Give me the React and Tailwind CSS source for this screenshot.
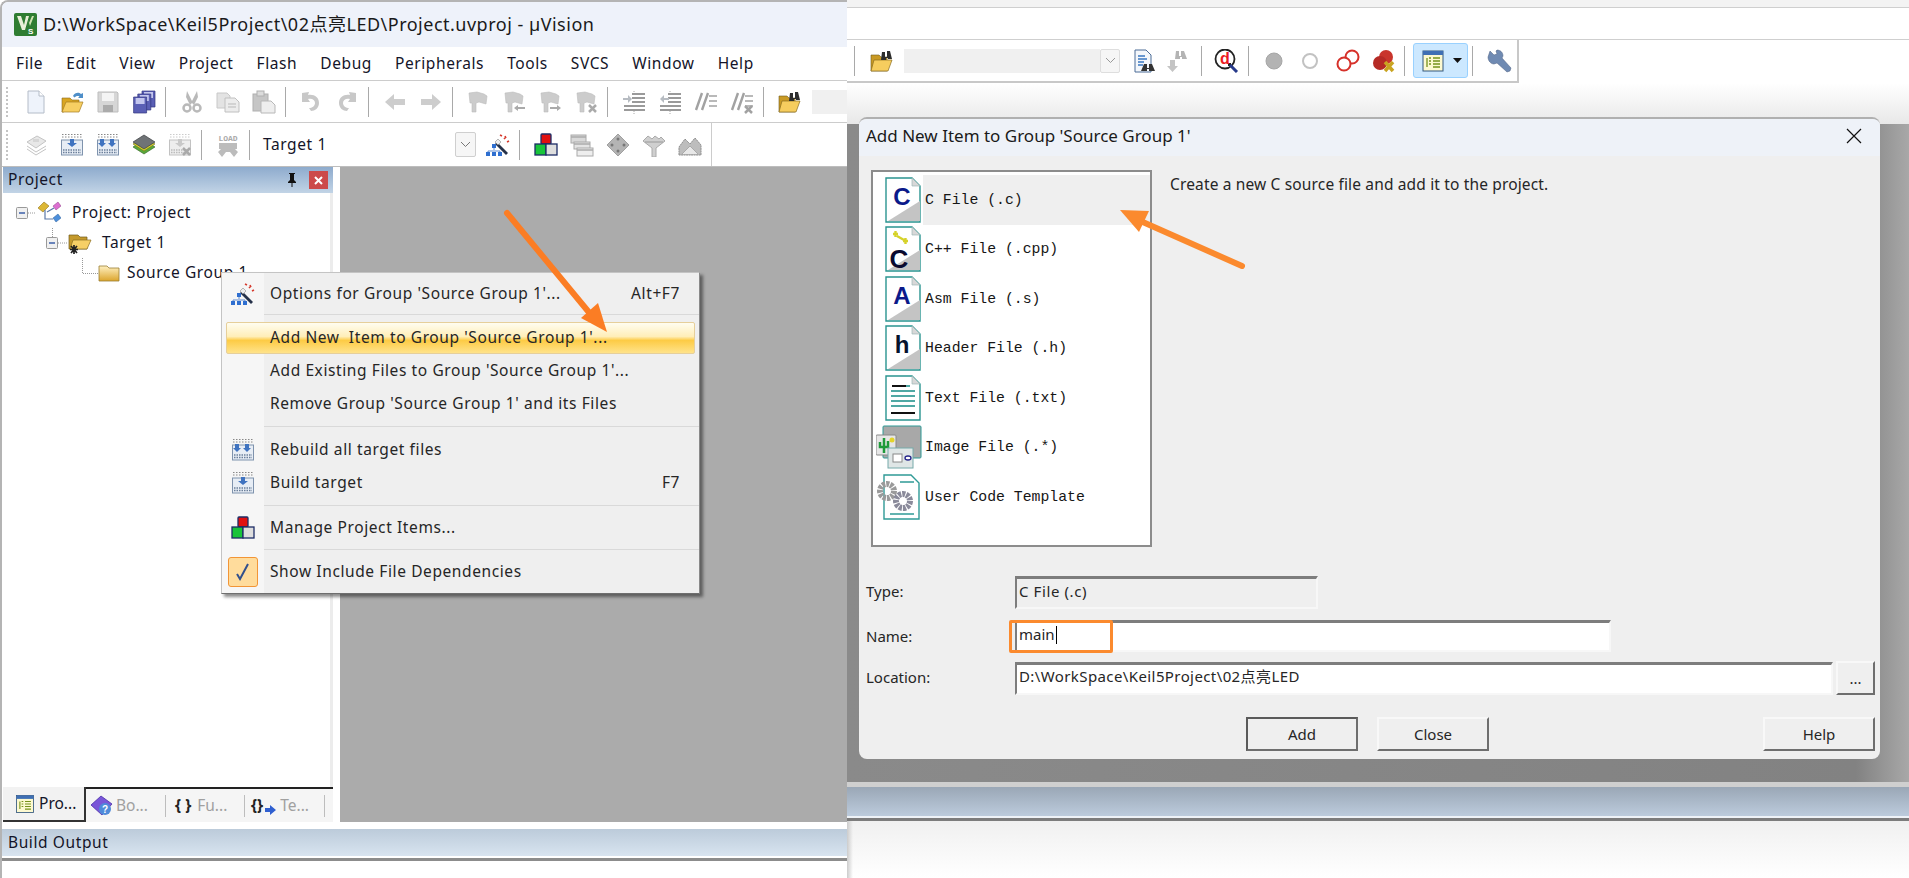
// --- toolbar / menu icons, drawn by hand on a 24 box ---
function Ico({ children, w = 24, h = 24, vb = '0 0 24 24' }) {
  return <svg width={w} height={h} viewBox={vb} className="shrink-0">{children}</svg>
}
const G = '#b9b9b9'
const NewDoc = () => <Ico><path d="M4 1h11l5 5v17H4z" fill="#eef3fb" stroke="#b4bcc8" /><path d="M15 1v5h5" fill="#fff" stroke="#b4bcc8" /></Ico>
const OpenFolder = () => <Ico w={26}><path d="M2 8h8l2 2h7v3H7l-3 9H2z" fill="#d9a520" stroke="#8a6a20" strokeWidth=".6" /><path d="M6 12h17l-4 10H2z" fill="#f7cf62" stroke="#a57d22" strokeWidth=".7" /><path d="M13 6c2-4 6-4 8-2l2-1v5h-5l1.500-1.500c-2-1-4 0-5 1z" fill="#4f8fc9" /></Ico>
const Save = () => <Ico><path d="M2 2h19l1 1v19H2z" fill="#d6d6d6" stroke="#bdbdbd" /><rect x="6" y="3" width="12" height="8" fill="#f4f4f4" /><rect x="7" y="15" width="10" height="7" fill="#ababab" /></Ico>
const SaveAll = () => <Ico>{[0, 3, 6].map(o => <g key={o} transform={`translate(${9 - o * 1.4} ${o})`}><path d="M1 1h13v16H1z" fill="#5a5fb5" stroke="#34387f" strokeWidth=".7" /><rect x="3" y="2" width="9" height="6" fill="#c3c6ee" /></g>)}</Ico>
const Cut = () => <Ico><path d="M7 1l5 10 5-10 1 6-4 8-2-2-2 2-4-8z" fill={G} /><circle cx="7" cy="18" r="3.500" fill="none" stroke={G} strokeWidth="2.500" /><circle cx="17" cy="18" r="3.500" fill="none" stroke={G} strokeWidth="2.500" /></Ico>
const Copy = () => <Ico><path d="M1 3h10l3 3v12H1z" fill="#e3e3e3" stroke="#c8c8c8" /><path d="M9 8h10l4 4v10H9z" fill="#ececec" stroke="#c0c0c0" /><path d="M12 14h8M12 17h8" stroke={G} /></Ico>
const Paste = () => <Ico><rect x="1" y="4" width="15" height="17" fill="#c6c6c6" stroke="#b0b0b0" /><rect x="5" y="1" width="7" height="5" fill="#dcdcdc" stroke="#b0b0b0" /><path d="M9 11h10l4 4v8H9z" fill="#eee" stroke="#b8b8b8" /></Ico>
const Undo = ({ flip }) => <Ico><g transform={flip ? 'matrix(-1 0 0 1 24 0)' : undefined}><path d="M3 3l7-1-1 3c6-1 11 2 11 8 0 5-4 8-8 8l-2-3c3 0 6-2 6-5s-3-5-7-4l2 3-8 0z" fill="#c8c8c8" /></g></Ico>
const Arrow = ({ flip }) => <Ico><g transform={flip ? 'matrix(-1 0 0 1 24 0)' : undefined}><path d="M2 12l9-8v5h11v6H11v5z" fill="#cdcdcd" /></g></Ico>
const Flag = ({ mark }) => (
  <Ico>
    <path d="M3 3l8-1 7 2 3 2-1 8-7-2-3 1v9H6v-9l-2 0z" fill="#cccccc" stroke="#bcbcbc" strokeWidth=".6" />
    {mark === 'l' && <path d="M12 18l4-3v2h7v2h-7v2z" fill="#aaa" />}
    {mark === 'r' && <path d="M23 18l-4-3v2h-7v2h7v2z" fill="#aaa" />}
    {mark === 'x' && <path d="M15 15l7 7m0-7l-7 7" stroke="#aaa" strokeWidth="2.500" />}
  </Ico>
)
const Indent = ({ flip }) => (
  <Ico>
    <path d="M10 4h13M10 8h13M10 12h13M2 16h21M2 20h21" stroke="#9a9a9a" strokeWidth="1.800" />
    <path d="M12 1v2M12 21v3" stroke="#aaa" strokeDasharray="1 1" />
    <g transform={flip ? 'matrix(-1 0 0 1 12 0)' : undefined}><path d="M1 8h5V5l4 4-4 4v-3H1z" fill="#b7bcc2" /></g>
  </Ico>
)
const Comment = ({ x }) => (
  <Ico>
    <path d="M2 20L8 3M8 20L14 3" stroke="#a2a2a2" strokeWidth="2.400" />
    <path d="M15 6h8M15 11h8M15 16h8" stroke="#a2a2a2" strokeWidth="1.500" />
    {x && <path d="M15 16l7 7m0-7l-7 7" stroke="#a2a2a2" strokeWidth="2.500" />}
  </Ico>
)
const FindFolder = () => <Ico w={26}><path d="M2 6h8l2 2h6v14H2z" fill="#c99a24" stroke="#6e5a20" strokeWidth=".6" /><path d="M5 11h18l-4 11H2z" fill="#f6cd5e" stroke="#8a6d20" strokeWidth=".7" /><path d="M13 3h3v5h2V2h3l2 8h-4v-1h-2v2h-5z" fill="#2d2d2d" /></Ico>
const Translate = () => <Ico><path d="M3 9l10-6 9 5-10 7z" fill="#e8e8e8" stroke="#c4c4c4" /><path d="M3 13l9 6 10-6M3 16l9 6 10-6" fill="none" stroke="#c4c4c4" /><path d="M9 6h6v3H9z" fill="#d6d6d6" /></Ico>
const Build = ({ two, off }) => {
  const c = off ? '#c9c9c9' : '#3f73c0'
  const frame = off ? '#c2c2c2' : '#7f93ad'
  return (
    <Ico>
      <path d="M2 4h20M2 1.500h20" stroke={off ? '#ccc' : '#888'} strokeDasharray="1.500 1.500" />
      <rect x="1.500" y="7" width="21" height="15" fill={off ? '#eee' : '#e7edf5'} stroke={frame} />
      <path d="M3 17h18M3 19.500h18" stroke={off ? '#bbb' : '#6b7f9a'} strokeDasharray="1.500 1" strokeWidth="1.400" />
      {two ? <path d="M4 6h4v4h2l-4 4-4-4h2zM14 6h4v4h2l-4 4-4-4h2z" fill={c} /> : <path d="M10 6h4v4h3l-5 4-5-4h3z" fill={c} />}
      {off && <path d="M15 15l7 7m0-7l-7 7" stroke="#aaa" strokeWidth="2.500" />}
    </Ico>
  )
}
const BatchBuild = () => <Ico><path d="M1 14l11 7 11-7-3-2H4z" fill="#5aa83a" stroke="#2f5f22" strokeWidth=".6" /><path d="M1 11l11 7 11-7-3-2H4z" fill="#dbd62a" stroke="#6f6d1a" strokeWidth=".6" /><path d="M1 9l11-7 11 7-11 7z" fill="#6f7376" stroke="#3b3d40" strokeWidth=".7" /></Ico>
const Load = () => <Ico><text x="12" y="8" textAnchor="middle" fontSize="8" fontFamily='"Liberation Mono",monospace' fill="#aaa" fontWeight="700">LOAD</text><path d="M3 10h18v6h-2l3 3-4 5-4-5-2 0-2 0-4 5-4-5 3-3H3z" fill="#bcbcbc" /></Ico>
const Wand = () => <Ico><path d="M11 9l11 11-2 2L9 11z" fill="#26324a" /><path d="M9 9l3-3 3 3-3 3z" fill="#eee" stroke="#777" strokeWidth=".5" /><path d="M14 2l2 1M19 3l1 2M21 9l2-1M18 6l2-2" stroke="#d63a2e" strokeWidth="1.600" /><path d="M8 13v4M2 21v-3h12v3" fill="none" stroke="#5f8bd0" /><rect x="6" y="11" width="4" height="4" fill="#2f6fd0" /><rect x="0" y="19" width="4" height="4" fill="#2f6fd0" /><rect x="6" y="19" width="4" height="4" fill="#2f6fd0" /><rect x="12" y="19" width="4" height="4" fill="#2f6fd0" /></Ico>
const Manage = () => <Ico><rect x="7" y="1" width="10" height="10" rx="1" fill="#e01010" stroke="#1c2c66" strokeWidth="1.300" /><rect x="1" y="11" width="11" height="11" fill="#18c43a" stroke="#1c2c66" strokeWidth="1.300" /><rect x="12" y="11" width="11" height="11" fill="#dedede" stroke="#1c2c66" strokeWidth="1.300" /></Ico>
const Windows = () => <Ico><rect x="1" y="2" width="15" height="8" fill="#d9d9d9" stroke="#aaa" /><rect x="4" y="9" width="16" height="7" fill="#e4e4e4" stroke="#aaa" /><rect x="7" y="15" width="16" height="8" fill="#eee" stroke="#aaa" /><path d="M1 4h15M4 11h16M7 17h16" stroke="#aaa" strokeWidth="1.500" /></Ico>
const Diamond = () => <Ico><path d="M12 1l11 11-11 11L1 12z" fill="#b4b4b4" stroke="#a0a0a0" /><circle cx="12" cy="6" r="1.500" fill="#777" /><circle cx="6" cy="12" r="1.500" fill="#777" /><circle cx="18" cy="12" r="1.500" fill="#777" /><circle cx="12" cy="18" r="1.500" fill="#777" /></Ico>
const Funnel = () => <Ico><path d="M1 8l5-5 4 3 3-3 4 3 2-2 4 4-9 7v9h-4v-9z" fill="#cfcfcf" stroke="#aaa" /><path d="M3 9h18" stroke="#999" /></Ico>
const Stack = () => <Ico><path d="M1 22v-8l6-8 5 5 5-6 6 7v10z" fill="#bdbdbd" stroke="#8f8f8f" strokeDasharray="2 .5" /><path d="M4 21l8-8 8 8" fill="#e8e8e8" stroke="#aaa" /></Ico>
const DocFind = () => <Ico><path d="M3 1h11l5 5v17H3z" fill="#f4f7fb" stroke="#4d6c97" /><path d="M6 7h7M6 10h9M6 13h6M6 16h5" stroke="#3a78c2" strokeWidth="1.300" /><path d="M12 15h3v4h2v-4h3l3 7h-6v-2h-2v2h-6z" fill="#333" /></Ico>
const FindDown = () => <Ico><path d="M10 2h3v5h2V2h3l3 8h-5V8h-2v2H9z" fill="#b4b4b4" /><path d="M4 11h5v6h3l-5.500 6L1 17h3z" fill="#c4c4c4" /></Ico>
const Debug = () => <Ico w={26}><circle cx="11" cy="10" r="9.500" fill="#fff" stroke="#222" strokeWidth="1.800" /><rect x="14" y="14" width="3" height="3" fill="#222" /><path d="M16 16l7 7" stroke="#273a8a" strokeWidth="3" /><text x="11" y="15" textAnchor="middle" fontSize="16" fontWeight="700" fontFamily='"Liberation Sans",sans-serif' fill="#ec1c24">d</text></Ico>
const Dot = ({ hollow }) => <Ico><circle cx="12" cy="12" r={hollow ? 7 : 8} fill={hollow ? '#fff' : '#b3b3b3'} stroke={hollow ? '#c2c2c2' : '#a6a6a6'} strokeWidth={hollow ? 2 : 1} /></Ico>
const Rings = () => <Ico w={26}><circle cx="17" cy="8" r="6.500" fill="#fff" stroke="#d6312a" strokeWidth="2" /><circle cx="9" cy="15" r="6.500" fill="#fff" stroke="#d6312a" strokeWidth="2" /></Ico>
const RingsX = () => <Ico w={26}><circle cx="15" cy="8" r="7" fill="#c9352c" /><circle cx="9" cy="14" r="7" fill="#b52a25" /><path d="M14 13l8 9m0-9l-8 9" stroke="#c9a421" strokeWidth="3.500" /></Ico>
const WinView = () => <Ico><rect x="2" y="2" width="20" height="20" fill="#fdf9d0" stroke="#33577e" /><rect x="2" y="2" width="20" height="4" fill="#3f6fb4" /><path d="M6 9v9M8 9h2M8 12h2M8 15h2M12 9h7M12 12h7M12 15h7M12 18h7" stroke="#76921c" strokeWidth="1.300" /></Ico>
const Wrench = () => <Ico w={26}><path d="M3 2l4 4 3-1-1-3 1-1c3 0 6 2 6 6l-1 2 9 10-1 3-3 1-10-9-3 1C4 15 1 12 1 8z" fill="#6f8ab2" stroke="#4c5f80" strokeWidth=".5" /></Ico>

function Sep() {
  return <div className="flex h-full w-[11.5px] items-center pl-[3px]"><div className="h-[30px] w-px bg-[#a9a9a9]" /></div>
}
function Cell({ children }) {
  return <div className="flex w-[36px] shrink-0 items-center justify-center">{children}</div>
}
function Grip() {
  return <div className="flex w-[16px] shrink-0 justify-center pr-[6px]"><div className="h-[30px] w-[2px] border-l-2 border-dotted border-[#c4c4c4]" /></div>
}

function LeftWindow() {
  const menu = ['File', 'Edit', 'View', 'Project', 'Flash', 'Debug', 'Peripherals', 'Tools', 'SVCS', 'Window', 'Help']
  return (
    <div className="flex h-[878px] w-[847px] shrink-0 flex-col overflow-hidden rounded-tl-lg border-l-2 border-t-2 border-[#b4b4b4]">
      <div className="flex h-[45px] shrink-0 items-center gap-[6px] bg-[#eef2fa] pl-[12px] text-[18px] tracking-[.5px] text-[#1a1a1a]">
        <svg width="23" height="23" viewBox="0 0 23 23"><rect width="23" height="23" rx="2" fill="#2f7d32" /><path d="M3 3h4l3 9 2-9h3l-4 14H8z" fill="#e8f0d8" /><path d="M13 3l2 7 3-7h2l-4 10z" fill="#cfe3b0" /><text x="17" y="21" textAnchor="middle" fontSize="8" fontWeight="700" fill="#fff" fontFamily='"Liberation Sans",sans-serif'>S</text></svg>
        <span>D:\WorkSpace\Keil5Project\02点亮LED\Project.uvproj - µVision</span>
      </div>
      <div className="flex h-[34px] shrink-0 items-center gap-[23px] border-b border-[#cccccc] bg-white pl-[14px] text-[15.500px] tracking-[.6px] text-[#141428]">
        {menu.map(m => <span key={m}>{m}</span>)}
      </div>
      <div className="flex h-[42px] shrink-0 items-center border-b border-[#cccccc] bg-white">
        <Grip />
        <Cell><NewDoc /></Cell><Cell><OpenFolder /></Cell><Cell><Save /></Cell><Cell><SaveAll /></Cell>
        <Sep />
        <Cell><Cut /></Cell><Cell><Copy /></Cell><Cell><Paste /></Cell>
        <Sep />
        <Cell><Undo /></Cell><Cell><Undo flip /></Cell>
        <Sep />
        <Cell><Arrow /></Cell><Cell><Arrow flip /></Cell>
        <Sep />
        <Cell><Flag /></Cell><Cell><Flag mark="l" /></Cell><Cell><Flag mark="r" /></Cell><Cell><Flag mark="x" /></Cell>
        <Sep />
        <Cell><Indent /></Cell><Cell><Indent flip /></Cell><Cell><Comment /></Cell><Cell><Comment x /></Cell>
        <Sep />
        <Cell><FindFolder /></Cell>
        <div className="ml-[5px] h-[24px] flex-1 bg-[#f0f0f0]" />
      </div>
      <div className="flex h-[43px] shrink-0 items-center bg-white">
        <div className="flex h-full w-[710px] shrink-0 items-center border-r border-[#cccccc]">
          <Grip />
          <Cell><Translate /></Cell><Cell><Build /></Cell><Cell><Build two /></Cell><Cell><BatchBuild /></Cell><Cell><Build off /></Cell>
          <Sep />
          <Cell><Load /></Cell>
          <Sep />
          <span className="w-[198px] pl-[6px] text-[15.500px] tracking-[.6px] text-[#141428]">Target 1</span>
          <div className="flex h-[25px] w-[21px] items-center justify-center rounded-[2px] border border-[#cfcfcf] bg-[#f6f6f6]">
            <svg width="11" height="7" viewBox="0 0 11 7"><path d="M1 1l4.500 4.500L10 1" fill="none" stroke="#777" /></svg>
          </div>
          <div className="w-[4px]" />
          <Cell><Wand /></Cell>
          <Sep />
          <Cell><Manage /></Cell><Cell><Windows /></Cell><Cell><Diamond /></Cell><Cell><Funnel /></Cell><Cell><Stack /></Cell>
        </div>
      </div>
      <div className="flex flex-1 flex-col">
        <div className="flex h-[656px] shrink-0 border-t border-[#bdbdbd]">
          <ProjectPanel />
          <div className="w-[7px] bg-white" />
          <div className="flex-1 bg-[#ababab]" />
        </div>
        <div className="h-[7px] bg-white" />
        <div className="flex h-[27px] items-center bg-gradient-to-b from-[#bccbda] to-[#d8e4f0] pl-[6px] text-[15.500px] tracking-[.6px] text-[#141428]">Build Output</div>
        <div className="h-[2px] bg-white" />
        <div className="h-[3px] bg-[#8c8c8c]" />
        <div className="flex-1 bg-white" />
      </div>
    </div>
  )
}

function ProjectPanel() {
  return (
    <div className="ml-px flex w-[330px] shrink-0 flex-col bg-white">
      <div className="flex h-[26px] shrink-0 items-center bg-gradient-to-b from-[#8eabcd] to-[#c2d4e6] pl-[5px] pr-[5px] text-[15.500px] tracking-[.6px] text-[#141428]">
        <span className="flex-1">Project</span>
        <svg width="14" height="16" viewBox="0 0 14 16" className="mr-[10px]"><path d="M4 1h6v1H9v6l2 2v1H3v-1l2-2V2H4zM6.500 11h1v4h-1z" fill="#111" /></svg>
        <div className="flex h-[18px] w-[19px] items-center justify-center bg-[#cc4a4a]">
          <svg width="9" height="9" viewBox="0 0 9 9"><path d="M1 1l7 7m0-7l-7 7" stroke="#fff" strokeWidth="2" /></svg>
        </div>
      </div>
      <div className="flex-1 border-r-[3px] border-[#ececec] pt-[5px] text-[15.500px] tracking-[.6px] text-[#141428]">
        <div className="flex h-[30px] items-center">
          <svg width="33" height="30" viewBox="0 0 33 30" className="shrink-0"><rect x="13.500" y="9.500" width="11" height="11" rx="1" fill="#f0f0f0" stroke="#999" /><path d="M16 15h6" stroke="#3d5fa8" strokeWidth="1.500" /><path d="M25 15h8" stroke="#999" strokeDasharray="1 1" /></svg>
          <svg width="25" height="26" viewBox="0 0 25 26" className="shrink-0"><path d="M2 8l6-6 5 4-6 6z" fill="#dcb735" stroke="#94761c" strokeWidth=".6" /><path d="M17 6l5-4 3 4-5 4z" fill="#dc6fd0" stroke="#8d3f86" strokeWidth=".5" /><path d="M17 18l5-4 3 4-5 4z" fill="#4c8fdb" stroke="#2c5f9a" strokeWidth=".5" /><path d="M9 10v9h8M11 12l7-4" fill="none" stroke="#5a78a8" strokeWidth="1.200" /></svg>
          <span className="ml-[11px]">Project: Project</span>
        </div>
        <div className="flex h-[30px] items-center">
          <svg width="64" height="30" viewBox="0 0 64 30" className="shrink-0"><path d="M49.500 0v9" stroke="#999" strokeDasharray="1 1" /><rect x="43.500" y="9.500" width="11" height="11" rx="1" fill="#f0f0f0" stroke="#999" /><path d="M46 15h6" stroke="#3d5fa8" strokeWidth="1.500" /><path d="M55 15h9" stroke="#999" strokeDasharray="1 1" /></svg>
          <svg width="25" height="24" viewBox="0 0 25 24" className="shrink-0"><path d="M2 4h9l2 2h7v12H2z" fill="#c59a2c" stroke="#6f5a1e" strokeWidth=".7" /><path d="M6 9h18l-4 9H3z" fill="#f6cf66" stroke="#8a6d20" strokeWidth=".7" /><path d="M7 14v9M3 18.500h8M4 15l6 7m0-7l-6 7" stroke="#222" strokeWidth="1.700" /></svg>
          <span className="ml-[10px]">Target 1</span>
        </div>
        <div className="flex h-[30px] items-center">
          <svg width="95" height="30" viewBox="0 0 95 30" className="shrink-0"><path d="M79.500 0v15.500H95" fill="none" stroke="#999" strokeDasharray="1 1" /></svg>
          <svg width="22" height="18" viewBox="0 0 22 18" className="shrink-0"><defs><linearGradient id="fo" x1="0" y1="0" x2="0" y2="1"><stop offset="0" stopColor="#fff0c0" /><stop offset="1" stopColor="#dca52c" /></linearGradient></defs><path d="M1 2h8l2 2h10v13H1z" fill="url(#fo)" stroke="#9a7d34" strokeWidth=".8" /></svg>
          <span className="ml-[7px] whitespace-nowrap">Source Group 1</span>
        </div>
      </div>
      <div className="flex h-[35px] shrink-0 items-center bg-[#f5f5f5] text-[15.500px]">
        <div className="flex h-full w-[83px] shrink-0 items-center gap-[5px] border-b-2 border-r-2 border-[#333] bg-[#f2f2f2] pl-[10px] text-[#141428]"><div className="scale-[.85]"><WinView /></div><span className="-ml-[3px]">Pro...</span></div>
        <div className="flex h-full flex-1 items-center border-t-2 border-[#222] text-[#a0a0a0]">
          <div className="flex w-[79px] items-center gap-[2px] pl-[4px]">
            <svg width="24" height="24" viewBox="0 0 24 24"><path d="M1 11L11 2l11 8-10 11z" fill="#7a56d8" stroke="#4a2fa8" strokeWidth=".8" /><circle cx="15" cy="15" r="6" fill="#4f8bda" /><text x="15" y="19" textAnchor="middle" fontSize="10" fontWeight="700" fill="#fff" fontFamily='"Liberation Sans",sans-serif'>?</text></svg>
            <span>Bo...</span>
          </div>
          <div className="h-[22px] w-px bg-[#bdbdbd]" />
          <div className="flex w-[78px] items-center gap-[6px] pl-[9px]"><span className="font-bold text-[#222]">{'{ }'}</span><span>Fu...</span></div>
          <div className="h-[22px] w-px bg-[#bdbdbd]" />
          <div className="flex w-[79px] items-center gap-[2px] pl-[6px]">
            <span className="font-bold text-[#222]">{'{}'}</span>
            <svg width="11" height="10" viewBox="0 0 11 10" className="mt-[8px]"><path d="M0 3h5V0l6 5-6 5V7H0z" fill="#2f5fd0" /></svg>
            <span className="ml-[2px]">Te...</span>
          </div>
          <div className="h-[22px] w-px bg-[#bdbdbd]" />
        </div>
      </div>
    </div>
  )
}

function MenuRow({ icon, label, keys, hot }) {
  return (
    <div className={hot ? 'mx-[4px] flex h-[32px] items-center rounded-[2px] border border-[#e6cf9a] bg-[linear-gradient(180deg,#fffdf0_0%,#ffeeb8_45%,#fdcb45_58%,#ffe38a_100%)] pl-[43px] pr-[15px]' : 'flex h-[33px] items-center pr-[19px]'}>
      {!hot && <div className="flex w-[48px] shrink-0 justify-center pr-[6px]">{icon}</div>}
      <span className="flex-1 whitespace-pre">{label}</span>
      {keys && <span>{keys}</span>}
    </div>
  )
}
const MenuSep = () => <div className="my-[5px] ml-[42px] h-px bg-[#d9d9d9]" />

function ContextMenu() {
  return (
    <div className="absolute left-[221px] top-[272px] flex h-[322px] w-[479px] flex-col border border-[#c4c4c4] border-b-[#6e6e6e] border-r-[#8a8a8a] bg-[linear-gradient(90deg,#f6f6f6_42px,#efefef_42px)] text-[15.500px] tracking-[.6px] text-[#262626] shadow-[3px_3px_3px_rgba(0,0,0,.45)]">
      <div className="flex h-[41px] items-center pr-[19px]">
        <div className="flex w-[48px] shrink-0 justify-center pr-[6px]"><Wand /></div>
        <span className="flex-1">Options for Group 'Source Group 1'...</span>
        <span>Alt+F7</span>
      </div>
      <div className="ml-[42px] h-px bg-[#d9d9d9]" />
      <div className="h-[7px]" />
      <MenuRow hot label="Add New  Item to Group 'Source Group 1'..." />
      <MenuRow label="Add Existing Files to Group 'Source Group 1'..." />
      <MenuRow label="Remove Group 'Source Group 1' and its Files" />
      <div className="my-[6px] ml-[42px] h-px bg-[#d9d9d9]" />
      <MenuRow icon={<Build two />} label="Rebuild all target files" />
      <MenuRow icon={<Build />} label="Build target" keys="F7" />
      <div className="mb-[5px] mt-[6px] ml-[42px] h-px bg-[#d9d9d9]" />
      <MenuRow icon={<Manage />} label="Manage Project Items..." />
      <MenuSep />
      <MenuRow
        icon={
          <div className="flex h-[30px] w-[30px] items-center justify-center rounded-[3px] border border-[#f29536] bg-[#ffdc9c]">
            <svg width="14" height="18" viewBox="0 0 14 18"><path d="M1 11l3 5L12 1" fill="none" stroke="#32508c" strokeWidth="2" /></svg>
          </div>
        }
        label="Show Include File Dependencies"
      />
    </div>
  )
}

// --- file type icons of the dialog list ---
function FileIcon({ children, shaded = true }) {
  return (
    <svg width="36" height="46" viewBox="0 0 36 46" className="shrink-0">
      <path d="M1 1h26l8 8v36H1z" fill="#fff" stroke="#2a9490" strokeWidth="1.400" />
      <path d="M27 1v8h8z" fill="#d8d8d8" stroke="#9fb8b8" strokeWidth=".7" />
      {shaded && <path d="M3 44l32-20v20z" fill="#c4c4c4" />}
      {children}
    </svg>
  )
}
const letter = (t, c) => <text x="17" y="28" textAnchor="middle" fontSize="24" fontWeight="700" fontFamily='"Liberation Sans",sans-serif' fill={c}>{t}</text>
const fileIcons = [
  <FileIcon>{letter('C', '#0b1a8a')}</FileIcon>,
  <FileIcon>
    <path d="M8 8h5M10.500 5v6M18 15h5M20.500 12v6M12 10l7 4" stroke="#d6d22a" strokeWidth="2.400" />
    <text x="14" y="42" textAnchor="middle" fontSize="26" fontWeight="700" fontFamily='"Liberation Sans",sans-serif' fill="#0a0a30">C</text>
  </FileIcon>,
  <FileIcon>{letter('A', '#0b1a8a')}</FileIcon>,
  <FileIcon>{letter('h', '#06122e')}</FileIcon>,
  <FileIcon shaded={false}>
    <path d="M7 11h18M6 16h24M6 21h24M6 26h24M6 31h24" stroke="#4fa8a4" strokeWidth="2" />
    <path d="M7 11h14M6 38h24" stroke="#111" strokeWidth="2" />
  </FileIcon>,
  <svg width="46" height="44" viewBox="0 0 46 44" className="-ml-[9px] shrink-0">
    <rect x="7" y="1" width="38" height="32" rx="1" fill="#a8a8a8" stroke="#2f9a96" />
    <rect x="0" y="10" width="20" height="20" rx="1" fill="#e6e6e6" stroke="#888" />
    <path d="M8 13v15M4 17v5h8v-6" fill="none" stroke="#1f9a3a" strokeWidth="2.500" />
    <circle cx="16" cy="15" r="2.500" fill="#e4d42a" />
    <rect x="12" y="23" width="25" height="20" fill="#dfe6e6" stroke="#7aa" />
    <rect x="17" y="29" width="9" height="8" fill="#fff" stroke="#888" />
    <ellipse cx="32" cy="33" rx="3" ry="2" fill="#fff" stroke="#24248a" strokeWidth="1.300" />
  </svg>,
  <svg width="46" height="46" viewBox="0 0 46 46" className="-ml-[9px] shrink-0">
    <path d="M8 1h27l8 8v36H8z" fill="#fff" stroke="#2f9a96" strokeWidth="1.400" />
    <path d="M14 40h24M24 8h14" stroke="#2f9a96" strokeWidth="1.500" />
    <circle cx="11" cy="17" r="7" fill="none" stroke="#9a9a9a" strokeWidth="6" strokeDasharray="3 1" />
    <circle cx="27" cy="27" r="7" fill="none" stroke="#8a8a9a" strokeWidth="6" strokeDasharray="3 1" />
  </svg>,
]
const files = ['C File (.c)', 'C++ File (.cpp)', 'Asm File (.s)', 'Header File (.h)', 'Text File (.txt)', 'Image File (.*)', 'User Code Template']

function Sunken({ children, className }) {
  return <div className={'flex items-center border-b-2 border-l-2 border-r-2 border-t-[3px] border-b-[#f7f7f7] border-l-[#7d7d7d] border-r-[#f7f7f7] border-t-[#7d7d7d] pb-[4px] pl-[2px] text-[#262626] ' + className}>{children}</div>
}
function Btn({ label, className }) {
  return <button className={'flex h-[34px] items-center justify-center border-2 border-b-[#6e6e6e] border-r-[#6e6e6e] bg-[#efefef] text-[15px] text-[#262626] ' + className}>{label}</button>
}

function Dialog() {
  return (
    <div className="absolute left-[859px] top-[117px] flex h-[642px] w-[1021px] flex-col overflow-hidden rounded-lg border-t-2 border-[#b0b0b0] bg-[#efefef] text-[15px] text-[#262626]">
      <div className="flex h-[37px] shrink-0 items-center justify-between bg-[#eef2f8] pb-[3px] pl-[7px] pr-[18px] text-[17px] text-[#1a1a1a]">
        <span>Add New Item to Group 'Source Group 1'</span>
        <svg width="16" height="16" viewBox="0 0 16 16"><path d="M1 1l14 14m0-14L1 15" stroke="#111" strokeWidth="1.200" /></svg>
      </div>
      <div className="flex pl-[12px] pt-[14px]">
        <div className="h-[377px] w-[281px] shrink-0 border-2 border-[#8c8c8c] bg-white pl-[12px] pt-[3px]">
          {files.map((f, i) => (
            <div key={f} className="flex h-[49.500px] items-center">
              <div className="flex w-[38px] shrink-0">{fileIcons[i]}</div>
              <div className={'flex h-full flex-1 items-center pl-[2px] text-[14.800px] text-[#161616] [font-family:"Liberation_Mono",monospace] ' + (i === 0 ? 'bg-[#efefef]' : '')}>{f}</div>
            </div>
          ))}
        </div>
        <p className="ml-[18px] mt-[3px] text-[15.500px] tracking-[.15px]">Create a new C source file and add it to the project.</p>
      </div>
      <div className="mt-[29px] flex items-center pl-[7px]">
        <span className="w-[149px] pb-[2px]">Type:</span>
        <Sunken className="h-[33px] w-[303px] tracking-[.6px]">C File (.c)</Sunken>
      </div>
      <div className="mt-[11px] flex items-center pl-[7px]">
        <span className="w-[149px]">Name:</span>
        <Sunken className="relative h-[32px] w-[596px] bg-white">
          main<span className="ml-px h-[18px] w-px bg-black" />
          <div className="absolute -left-[8px] -top-[3px] h-[33px] w-[104px] rounded-[2px] border-[3px] border-[#fb8a2e]" />
        </Sunken>
      </div>
      <div className="mt-[9px] flex items-center pl-[7px]">
        <span className="w-[149px] pb-[2px]">Location:</span>
        <Sunken className="h-[33px] w-[818px] bg-white tracking-[.4px]">D:\WorkSpace\Keil5Project\02点亮LED</Sunken>
        <Btn label="..." className="ml-[3px] w-[39px] border-l-[#f8f8f8] border-t-[#f8f8f8]" />
      </div>
      <div className="mt-[22px] flex pl-[387px]">
        <Btn label="Add" className="w-[112px] border-l-[#5a5a5a] border-t-[#5a5a5a]" />
        <Btn label="Close" className="ml-[19px] w-[112px] border-l-[#f8f8f8] border-t-[#f8f8f8]" />
        <Btn label="Help" className="ml-[274px] w-[112px] border-l-[#f8f8f8] border-t-[#f8f8f8]" />
      </div>
    </div>
  )
}

function RightWindow() {
  return (
    <div className="flex h-[878px] flex-1 flex-col overflow-hidden">
      <div className="h-[7px] shrink-0 bg-[#f3f3f3]" />
      <div className="h-[33px] shrink-0 border-y border-[#cfcfcf] bg-white" />
      <div className="flex h-[43px] shrink-0 bg-white">
        <div className="flex h-full w-[672px] items-center border-b-2 border-r-2 border-[#c8c8c8]">
          <div className="ml-[7px] h-[30px] w-px bg-[#a9a9a9]" />
          <div className="ml-[13px]"><FindFolder /></div>
          <div className="ml-[10px] h-[24px] w-[196px] bg-[#f0f0f0]" />
          <div className="flex h-[24px] w-[20px] items-center justify-center rounded-[2px] border border-[#dedede] bg-[#f6f6f6]">
            <svg width="11" height="7" viewBox="0 0 11 7"><path d="M1 1l4.500 4.500L10 1" fill="none" stroke="#999" /></svg>
          </div>
          <div className="ml-[12px]"><DocFind /></div>
          <div className="ml-[10px]"><FindDown /></div>
          <div className="ml-[11px] h-[30px] w-px bg-[#a9a9a9]" />
          <div className="ml-[11px]"><Debug /></div>
          <div className="ml-[9px] h-[30px] w-px bg-[#a9a9a9]" />
          <div className="ml-[13px]"><Dot /></div>
          <div className="ml-[12px]"><Dot hollow /></div>
          <div className="ml-[12px]"><Rings /></div>
          <div className="ml-[10px]"><RingsX /></div>
          <div className="ml-[8px] h-[30px] w-px bg-[#a9a9a9]" />
          <div className="ml-[8px] flex h-[35px] w-[55px] items-center gap-[8px] rounded-[3px] border border-[#99d1ff] bg-[#cce8ff] pl-[7px]">
            <WinView />
            <svg width="9" height="5" viewBox="0 0 9 5"><path d="M0 0h9L4.500 5z" fill="#111" /></svg>
          </div>
          <div className="ml-[4px] h-[30px] w-px bg-[#a9a9a9]" />
          <div className="ml-[13px]"><Wrench /></div>
        </div>
      </div>
      <div className="h-[41px] shrink-0 bg-gradient-to-b from-white to-[#e8e8e8]" />
      <div className="h-[658px] shrink-0 bg-[linear-gradient(90deg,#8a8a8a_0%,#828282_95%,#a8a8a8_100%)]" />
      <div className="h-[5px] shrink-0 bg-[#cfcfcf]" />
      <div className="h-[29px] shrink-0 bg-[linear-gradient(180deg,#9aa7b6,#bccbdc)]" />
      <div className="h-[2px] shrink-0 bg-[#eef2f7]" />
      <div className="h-[3px] shrink-0 bg-[#7c7c7c]" />
      <div className="flex-1 bg-[linear-gradient(90deg,#cccccc,rgba(255,255,255,0)_6px),linear-gradient(180deg,#f0f0f0,#ffffff)]" />
    </div>
  )
}

export default function App() {
  return (
    <div className="relative flex h-[878px] w-[1909px] overflow-hidden bg-white [font-family:'Noto_Sans','Noto_Sans_CJK_SC',sans-serif]">
      <LeftWindow />
      <RightWindow />
      <ContextMenu />
      <Dialog />
      {/* orange annotation arrows */}
      <svg width="1909" height="878" className="pointer-events-none absolute left-0 top-0">
        <path d="M507 213L592 316" stroke="#fb7d24" strokeWidth="6" strokeLinecap="round" />
        <path d="M607 332L581 318L598 303z" fill="#fb7d24" />
        <path d="M1242 266L1136 219" stroke="#fb8a2e" strokeWidth="6" strokeLinecap="round" />
        <path d="M1120 210L1149 211L1139 232z" fill="#fb8a2e" />
      </svg>
    </div>
  )
}
